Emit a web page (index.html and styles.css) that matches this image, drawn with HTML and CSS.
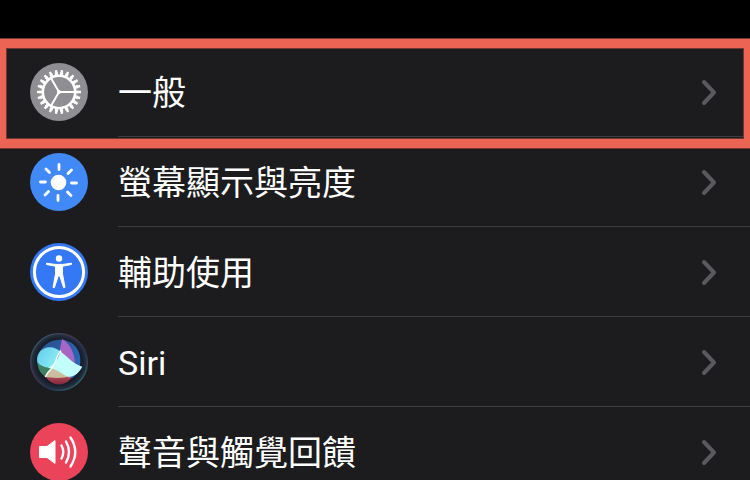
FILE: index.html
```html
<!DOCTYPE html>
<html lang="zh-Hant">
<head>
<meta charset="utf-8">
<meta name="viewport" content="width=device-width, initial-scale=1">
<title>設定</title>
<link rel="stylesheet" href="styles.css">
</head>
<body>
<svg class="defs" aria-hidden="true">
  <defs>
    <path id="chevron" d="M4 3 14 13.500 4 24" />
  </defs>
</svg>
<main>
  <ul class="list">
    <li class="row highlighted">
      <a class="link" href="#general">
        <svg class="icon" viewBox="-29 -29 58 58" aria-hidden="true">
          <circle r="29" fill="#8e8e93" />
          <g fill="none" stroke="#fff">
            <circle r="19.800" stroke-width="4.400" pathLength="44" stroke-dasharray=".8 1.2" stroke-dashoffset=".4" />
            <circle r="18.300" stroke-width="3" pathLength="44" stroke-dasharray="1.200 .8" stroke-dashoffset=".6" />
            <circle r="16.200" stroke-width="2.600" />
            <path stroke-width="2" d="M0 0H17M0 0-8.500-14.700M0 0-8.500 14.700" />
          </g>
          <circle r="2" fill="#fff" />
        </svg>
        <span class="content">
          <span class="label">一般</span>
          <svg class="chevron" viewBox="0 0 18 27" aria-hidden="true"><use href="#chevron" /></svg>
        </span>
      </a>
    </li>
    <li class="row">
      <a class="link" href="#display">
        <svg class="icon" viewBox="-29 -29 58 58" aria-hidden="true">
          <circle r="29" fill="#4189f7" />
          <circle cx="-.5" cy=".5" r="7.800" fill="#fff" />
          <path fill="none" stroke="#fff" stroke-width="2.800" stroke-linecap="round" d="M0-17.500V-12.500M9-8.500 12.500-12M12.500 1H17.500M8.500 10 12 13.500M-1 13.500V18.500M-10.500 9.500-14 13M-13.500 0H-18.500M-9.500-9.500-13-13" />
        </svg>
        <span class="content">
          <span class="label">螢幕顯示與亮度</span>
          <svg class="chevron" viewBox="0 0 18 27" aria-hidden="true"><use href="#chevron" /></svg>
        </span>
      </a>
    </li>
    <li class="row">
      <a class="link" href="#accessibility">
        <svg class="icon" viewBox="-29 -29 58 58" aria-hidden="true">
          <circle r="29" fill="#3478f6" />
          <circle r="24.600" fill="none" stroke="#fff" stroke-width="3" />
          <circle cy="-13.500" r="3.200" fill="#fff" />
          <path fill="#fff" stroke="#fff" stroke-linejoin="round" d="M-12.500-8.800-4-7.600H4L12.500-8.800V-7.500L3.500-5.800V2L6 15.300 4.600 15.700.8 4H-.8L-4.600 15.700-6 15.300-3.500 2V-5.800L-12.500-7.500Z" />
        </svg>
        <span class="content">
          <span class="label">輔助使用</span>
          <svg class="chevron" viewBox="0 0 18 27" aria-hidden="true"><use href="#chevron" /></svg>
        </span>
      </a>
    </li>
    <li class="row">
      <a class="link" href="#siri">
        <svg class="icon" viewBox="30 33 174 174" aria-hidden="true">
          <defs>
            <linearGradient id="rim" x1="0" y1="0" x2="1" y2="1">
              <stop offset="0" stop-color="#286970" />
              <stop offset=".35" stop-color="#4a3350" />
              <stop offset=".65" stop-color="#203557" />
              <stop offset="1" stop-color="#348070" />
            </linearGradient>
            <radialGradient id="orb">
              <stop offset=".65" stop-color="#11131d" />
              <stop offset=".85" stop-color="#1a2230" />
              <stop offset="1" stop-color="#2b3547" />
            </radialGradient>
            <linearGradient id="aqua" x1="0" y1="0" x2="1" y2=".5">
              <stop offset="0" stop-color="#61cbed" />
              <stop offset="1" stop-color="#8deef5" />
            </linearGradient>
            <linearGradient id="blue" x1="0" y1="0" x2="1" y2="1">
              <stop offset="0" stop-color="#27508c" />
              <stop offset="1" stop-color="#2c6fc4" />
            </linearGradient>
            <linearGradient id="red" x1="0" y1="0" x2="0" y2="1">
              <stop offset="0" stop-color="#b24b59" />
              <stop offset="1" stop-color="#84263c" />
            </linearGradient>
          </defs>
          <circle cx="117" cy="120" r="85" fill="url(#orb)" stroke="url(#rim)" stroke-width="4" />
          <path fill="url(#blue)" d="M60 88C76 60 105 50 130 54 165 58 184 90 181 122 179 145 168 163 152 170L100 140Z" />
          <path fill="#3d8061" d="M52 112C50 135 60 157 78 165L97 138Z" />
          <path fill="url(#red)" d="M76 162C100 170 128 160 155 166 138 196 92 194 76 162Z" />
          <path fill="#a766c4" d="M126 51C150 63 168 100 164 134 163 152 157 164 146 168L112 120Z" />
          <path fill="url(#aqua)" d="M52 120C47 96 66 76 88 76 102 76 112 81 121 88L97 138C80 137 60 134 52 120Z" />
          <path fill="#cbbd9f" d="M76 165C81 153 88 145 97 138L150 162C130 170 98 168 76 165Z" />
          <path fill="#c3fffa" d="M121 88C144 106 160 126 187 134 177 152 162 166 145 164 124 157 112 140 84 138 105 126 117 108 121 88Z" />
          <path fill="none" stroke="#fff" stroke-width="4" stroke-linecap="round" d="M122 87C108 102 110 122 94 140 84 149 79 156 76 164" />
        </svg>
        <span class="content">
          <span class="label">Siri</span>
          <svg class="chevron" viewBox="0 0 18 27" aria-hidden="true"><use href="#chevron" /></svg>
        </span>
      </a>
    </li>
    <li class="row">
      <a class="link" href="#sounds">
        <svg class="icon" viewBox="-29 -29 58 58" aria-hidden="true">
          <circle r="29" fill="#eb445a" />
          <path fill="#fff" stroke="#fff" stroke-linejoin="round" d="M-19.500-5.500H-12L-4-11.500V11.500L-12 5.500H-19.500Z" />
          <path fill="none" stroke="#fff" stroke-width="2.400" stroke-linecap="round" d="M2.500-6.500Q6 0 2.500 6.500M7-10.500Q13 0 7 10.500M11.500-14.500Q21 0 11.500 14.500" />
        </svg>
        <span class="content">
          <span class="label">聲音與觸覺回饋</span>
          <svg class="chevron" viewBox="0 0 18 27" aria-hidden="true"><use href="#chevron" /></svg>
        </span>
      </a>
    </li>
  </ul>
</main>
</body>
</html>
```

FILE: styles.css
```css
* {
  box-sizing: border-box;
}

html {
  height: 100%;
}

body {
  height: 100%;
  margin: 0;
  padding-top: 47px;
  overflow: hidden;
  background: #000;
  color: #fff;
  font-family: Roboto, "Noto Sans CJK TC", sans-serif;
  font-size: 34px;
  line-height: 46px;
}

.defs {
  position: absolute;
  width: 0;
  height: 0;
}

.list {
  margin: 0;
  padding: 0;
  list-style: none;
  background: #1c1c1e;
}

.row {
  position: relative;
}

.link {
  display: flex;
  align-items: center;
  gap: 30px;
  padding-left: 30px;
  color: inherit;
  text-decoration: none;
}

.icon {
  flex: none;
  width: 58px;
  height: 58px;
}

.content {
  display: flex;
  flex: 1;
  align-items: center;
  justify-content: space-between;
  height: 90px;
  padding: 2px 32px 0 0;
  border-bottom: 1px solid #3d3d41;
}

.label {
  font-weight: 400;
}

.chevron {
  width: 18px;
  height: 27px;
  fill: none;
  stroke: #5a5a5e;
  stroke-width: 4;
  stroke-linecap: round;
  stroke-linejoin: round;
}

.highlighted::after {
  content: "";
  position: absolute;
  z-index: 1;
  inset: -8px 0 -11px;
  border: solid #ec6453;
  border-width: 9px 6px;
  box-shadow: 0 0 0 1px #71382f, inset 0 0 0 1px #71382f;
  pointer-events: none;
}
```
